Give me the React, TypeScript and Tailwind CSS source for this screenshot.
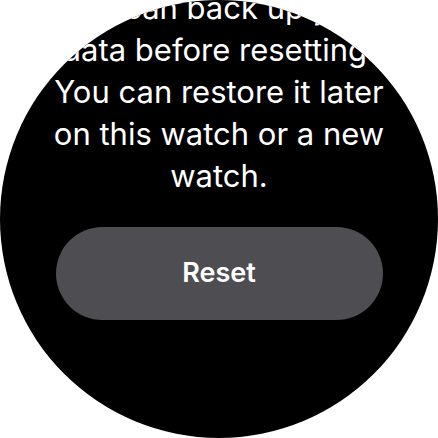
export default function App() {
  return (
    <div className="w-[438px] h-[438px] bg-white">
      <div className="w-[438px] h-[438px] rounded-full bg-black overflow-hidden flex flex-col items-center">
        <p
          className="mt-[-13px] text-white text-center text-[31px] leading-[42px] whitespace-nowrap"
          style={{ fontFamily: 'Inter, "Noto Sans", sans-serif' }}
        >
          You can back up your
          <br />
          data before resetting.
          <br />
          You can restore it later
          <br />
          on this watch or a new
          <br />
          watch.
        </p>
        <button
          className="mt-[30px] w-[327px] h-[93px] rounded-full bg-[#4e4e52] text-white text-[27px] font-semibold"
          style={{ fontFamily: 'Inter, "Noto Sans", sans-serif' }}
        >
          Reset
        </button>
      </div>
    </div>
  );
}
